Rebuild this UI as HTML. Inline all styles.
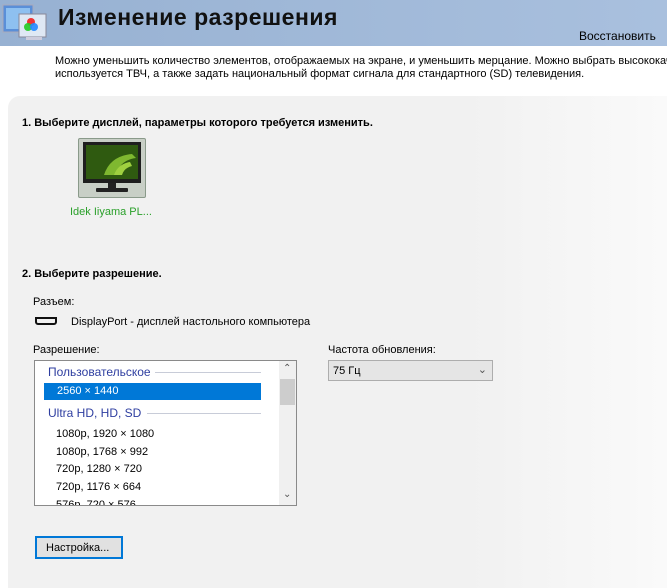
<!DOCTYPE html>
<html><head><meta charset="utf-8"><style>
*{margin:0;padding:0;box-sizing:border-box}
body{width:667px;height:588px;overflow:hidden;background:#fff;font-family:"Liberation Sans","DejaVu Sans",sans-serif;font-size:11px;color:#000}
#w{position:relative;width:667px;height:588px;overflow:hidden}
.hdr{position:absolute;left:0;top:0;width:667px;height:46px;background:linear-gradient(90deg,#97b1d2,#a9c0de)}
.title{position:absolute;left:58px;top:4px;font-size:23px;font-weight:bold;letter-spacing:0.5px;color:#111}
.rest{position:absolute;left:579px;top:29px;font-size:12px}
.desc{position:absolute;left:55px;top:55px;width:612px;overflow:hidden;font-size:11px;line-height:13px;white-space:nowrap}
.panel{position:absolute;left:8px;top:96px;width:659px;height:492px;background:linear-gradient(90deg,#f1f1f1 70%,#fafafa);border-radius:12px 0 0 0}
.abs{position:absolute;white-space:nowrap}
.b{font-weight:bold;font-size:11px}
.list{position:absolute;left:34px;top:360px;width:263px;height:146px;border:1px solid #8a8a8a;background:#fff;overflow:hidden}
.list div{position:absolute;white-space:nowrap;font-size:11px}
.grp{color:#2e3ea0;font-size:12px!important}
.sel{left:9px;top:22px;width:217px;height:17px;background:#0078d7;color:#fff;padding:2px 0 0 13px}
.sb{position:absolute;right:0;top:0;width:17px;height:144px;background:#f0f0f0}
</style></head><body><div id="w">
<div class="hdr"></div>
<svg class="abs" style="left:0;top:2px" width="50" height="42" viewBox="0 0 50 42">
<rect x="3" y="3" width="30" height="27" fill="#5a8fd8" stroke="#aab" />
<rect x="6" y="6" width="24" height="21" fill="#8ec0f0"/>
<rect x="19" y="12" width="27" height="23" fill="#dfe8f4" stroke="#889"/>
<circle cx="31" cy="20" r="4" fill="#e33"/><circle cx="28" cy="25" r="4" fill="#2c2" opacity=".9"/><circle cx="34" cy="25" r="4" fill="#28f" opacity=".9"/>
<rect x="26" y="35" width="16" height="3" fill="#ccd"/>
</svg>
<div class="abs title">Изменение разрешения</div>
<div class="abs rest">Восстановить</div>
<div class="desc">Можно уменьшить количество элементов, отображаемых на экране, и уменьшить мерцание. Можно выбрать высококачественный<br>используется ТВЧ, а также задать национальный формат сигнала для стандартного (SD) телевидения.</div>
<div class="panel"></div>
<div class="abs b" style="left:22px;top:117px">1. Выберите дисплей, параметры которого требуется изменить.</div>
<div class="abs" style="left:78px;top:138px;width:68px;height:60px;background:#c8cfc6;border:1px solid #8a9a8a;border-radius:2px"></div>
<svg class="abs" style="left:80px;top:142px" width="64" height="54" viewBox="0 0 64 54">
<rect x="3" y="0" width="58" height="41" fill="#1e1e1e"/>
<rect x="6" y="3" width="52" height="34" fill="#2f5a10"/>
<path d="M24 33 Q30 14 52 12 L56 16 Q40 18 36 33 Z" fill="#7fb830"/>
<path d="M34 33 Q38 22 50 20 L52 24 Q44 26 42 33Z" fill="#9fd040"/>
<rect x="28" y="41" width="8" height="5" fill="#222"/><rect x="16" y="46" width="32" height="4" rx="1" fill="#222"/>
</svg>
<div class="abs" style="left:70px;top:206px;color:#2aa02a">Idek Iiyama PL...</div>
<div class="abs b" style="left:22px;top:268px">2. Выберите разрешение.</div>
<div class="abs" style="left:33px;top:296px">Разъем:</div>
<div class="abs" style="left:35px;top:317px;width:22px;height:8px;border:2px solid #111;border-radius:0 0 3px 3px"></div>
<div class="abs" style="left:71px;top:316px">DisplayPort - дисплей настольного компьютера</div>
<div class="abs" style="left:33px;top:344px">Разрешение:</div>
<div class="abs" style="left:328px;top:344px">Частота обновления:</div>
<div class="list">
<div class="grp" style="left:13px;top:4px">Пользовательское</div>
<div style="left:120px;top:11px;width:106px;height:1px;background:#c8ccd8"></div>
<div class="sel">2560 × 1440</div>
<div class="grp" style="left:13px;top:45px">Ultra HD, HD, SD</div>
<div style="left:112px;top:52px;width:114px;height:1px;background:#c8ccd8"></div>
<div style="left:21px;top:67px">1080p, 1920 × 1080</div>
<div style="left:21px;top:85px">1080p, 1768 × 992</div>
<div style="left:21px;top:102px">720p, 1280 × 720</div>
<div style="left:21px;top:120px">720p, 1176 × 664</div>
<div style="left:21px;top:138px">576p, 720 × 576</div>
<div class="sb"><div style="left:4px;top:2px;font-size:10px;color:#555">⌃</div><div style="left:1px;top:18px;width:15px;height:26px;background:#cdcdcd"></div><div style="left:4px;top:128px;font-size:10px;color:#555">⌄</div></div>
</div>
<div class="abs" style="left:328px;top:360px;width:165px;height:21px;background:#e5e5e5;border:1px solid #adadad;padding:4px 0 0 4px">75 Гц<span style="position:absolute;right:5px;top:2px;color:#555">⌄</span></div>
<div class="abs" style="left:35px;top:536px;width:88px;height:23px;border:2px solid #0078d7;background:#e1e1e1;padding:4px 0 0 9px">Настройка...</div>
</div></body></html>
